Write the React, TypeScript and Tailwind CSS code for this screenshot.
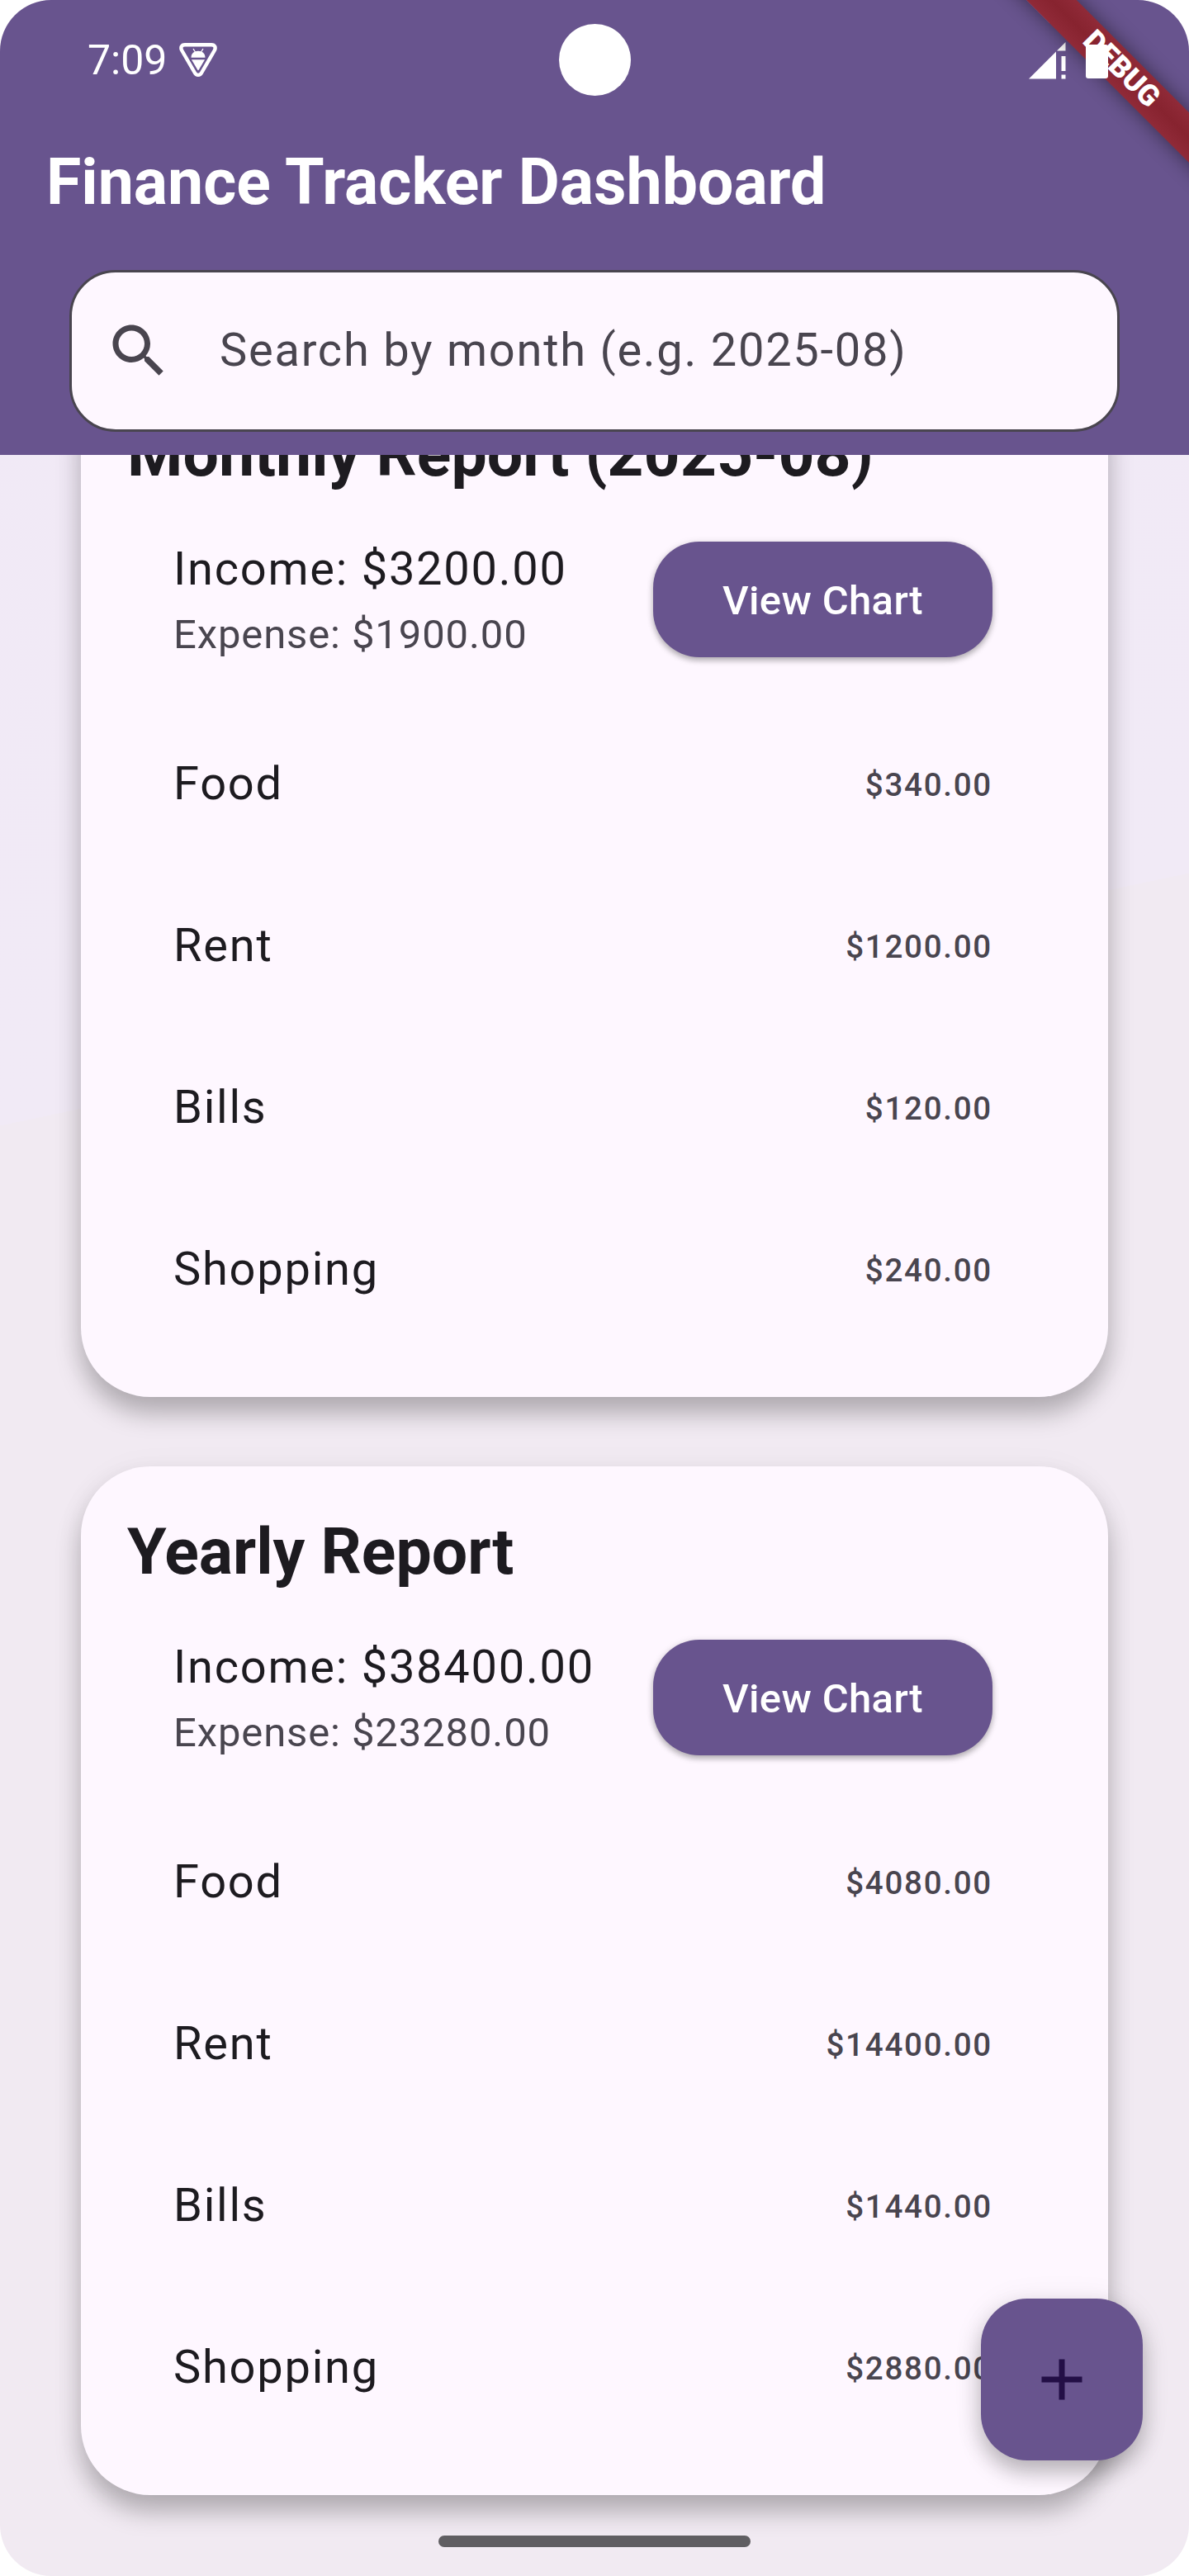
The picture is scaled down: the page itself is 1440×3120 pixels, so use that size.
import React from "react";

type Row = { name: string; amount: string };
type Report = { title: string; income: string; expense: string; rows: Row[] };

const reports: Report[] = [
  {
    title: "Monthly Report (2025-08)",
    income: "$3200.00",
    expense: "$1900.00",
    rows: [
      { name: "Food", amount: "$340.00" },
      { name: "Rent", amount: "$1200.00" },
      { name: "Bills", amount: "$120.00" },
      { name: "Shopping", amount: "$240.00" },
    ],
  },
  {
    title: "Yearly Report",
    income: "$38400.00",
    expense: "$23280.00",
    rows: [
      { name: "Food", amount: "$4080.00" },
      { name: "Rent", amount: "$14400.00" },
      { name: "Bills", amount: "$1440.00" },
      { name: "Shopping", amount: "$2880.00" },
    ],
  },
];

function DebugBadgeIcon() {
  return (
    <svg className="h-[44px] w-[48px]" viewBox="0 0 48 44" fill="none">
      <path
        d="M8 3.2H40C44.3 3.2 45.6 6.6 43.8 10L28.2 37C26.2 40.8 21.8 40.8 19.8 37L4.2 10C2.4 6.6 3.7 3.2 8 3.2Z"
        stroke="white"
        strokeWidth="4.4"
      />
      <path d="M15.5 18.7C15.5 13.8 19.2 10.8 24 10.8S32.5 13.8 32.5 18.7Z" fill="white" />
      <path d="M18 8.2L20.5 12M30 8.2L27.5 12" stroke="white" strokeWidth="1.3" />
      <path d="M16 21.3H32L24.8 33.6Q24 34.8 23.2 33.6Z" fill="white" />
    </svg>
  );
}

function StatusBar() {
  return (
    <div className="flex h-[144px] items-center justify-between pl-[106px] pr-[149px] pt-[2px]">
      <div className="flex items-center gap-[14px]">
        <span className="text-[50px] leading-[56px] text-white">7:09</span>
        <DebugBadgeIcon />
      </div>
      <svg className="h-[45px] w-[45px]" viewBox="0 0 45 45" fill="white">
        <path d="M0 44.5L33 11.5V44.5ZM34 10.5L44.5 0V10.5ZM39.5 17H44.5V35H39.5ZM39.5 39.5H44.5V44.5H39.5Z" />
      </svg>
    </div>
  );
}

function Header() {
  return (
    <header className="relative z-10 h-[551px] shrink-0 bg-[#68548e]">
      <StatusBar />
      <h1 className="flex h-[154px] items-center pl-[56px] pt-[2px] text-[77px] font-bold text-white">
        Finance Tracker Dashboard
      </h1>
      <div className="mx-[84px] mt-[29px] flex h-[196px] items-center rounded-[56px] border-[3.5px] border-[#49454f] bg-[#fef7ff] pl-[39px]">
        <svg className="h-[84px] w-[84px]" viewBox="0 0 24 24" fill="#49454f">
          <path d="M15.5 14h-.79l-.28-.27C15.41 12.59 16 11.11 16 9.5 16 5.91 13.09 3 9.5 3S3 5.91 3 9.5 5.91 16 9.5 16c1.61 0 3.09-.59 4.23-1.57l.27.28v.79l5 4.99L20.49 19l-4.99-5zm-6 0C7.01 14 5 11.99 5 9.5S7.01 5 9.5 5 14 7.01 14 9.5 11.99 14 9.5 14z" />
        </svg>
        <span className="ml-[56px] pb-[3px] text-[56px] leading-[84px] tracking-[1.75px] text-[#49454f]">
          Search by month (e.g. 2025-08)
        </span>
      </div>
    </header>
  );
}

function ReportCard({ report }: { report: Report }) {
  return (
    <section className="h-[1246px] shrink-0 rounded-[84px] bg-[#fef7ff] p-[56px] shadow-[0_20px_30px_rgba(0,0,0,0.26),0_3px_40px_rgba(0,0,0,0.04)]">
      <h2 className="h-[98px] text-[77px] font-bold leading-[97px] text-[#1d1b20]">{report.title}</h2>
      <div className="flex h-[252px] items-center justify-between pl-[56px] pr-[84px]">
        <div>
          <p className="h-[84px] text-[56px] leading-[81px] tracking-[1.75px] text-[#1d1b20]">Income: {report.income}</p>
          <p className="h-[70px] text-[49px] leading-[72px] tracking-[0.875px] text-[#49454f]">Expense: {report.expense}</p>
        </div>
        <button className="h-[140px] w-[411px] rounded-[56px] bg-[#68548e] pt-[3px] text-[49px] font-medium tracking-[0.35px] text-white shadow-[0_4px_7px_rgba(0,0,0,0.26),0_1px_10px_rgba(0,0,0,0.1)]">
          View Chart
        </button>
      </div>
      {report.rows.map((row) => (
        <div key={row.name} className="flex h-[196px] items-center justify-between pl-[56px] pr-[84px]">
          <span className="h-[84px] text-[56px] leading-[82px] tracking-[1.75px] text-[#1d1b20]">{row.name}</span>
          <span className="h-[56px] text-[38.5px] font-medium leading-[58px] tracking-[1.75px] text-[#49454f]">
            {row.amount}
          </span>
        </div>
      ))}
    </section>
  );
}

export default function App() {
  return (
    <div className="h-[3120px] w-[1440px] bg-white font-['Roboto',sans-serif]">
      <div className="relative flex h-full flex-col overflow-hidden rounded-[62px] bg-[linear-gradient(168deg,#f1e9f6_0%,#f1eaf6_39.8%,#f1eaf2_39.8%,#f1eaf2_100%)]">
        <Header />
        <main className="-mt-[105px] flex flex-col gap-[84px] px-[98px]">
          {reports.map((report) => (
            <ReportCard key={report.title} report={report} />
          ))}
        </main>

        {/* Camera cutout */}
        <div className="absolute left-[677px] top-[29px] z-20 h-[87px] w-[87px] rounded-full bg-white" />

        {/* Debug ribbon, with the battery drawn over it */}
        <div className="absolute right-0 top-0 z-10 h-[280px] w-[320px] overflow-hidden">
          <div className="absolute left-[26px] top-[61px] flex h-[42.5px] w-[420px] rotate-45 items-center justify-center bg-linear-to-b from-[#902a38] via-[#87232f] to-[#902a38] pl-[5px] shadow-[0_0_24px_rgba(0,0,0,0.48)]">
            <span className="text-[35.7px] font-black leading-none text-white">DEBUG</span>
          </div>
        </div>
        <div className="absolute right-[98px] top-[54px] z-20 h-[41px] w-[27px] rounded-[3px] bg-white" />

        <button className="absolute right-[56px] top-[2784px] flex h-[196px] w-[196px] items-center justify-center rounded-[56px] bg-[#68548e] shadow-[0_14px_26px_rgba(0,0,0,0.25),0_3px_38px_rgba(0,0,0,0.07)]">
          <svg className="h-[84px] w-[84px]" viewBox="0 0 24 24" fill="#230f46">
            <path d="M19 13h-6v6h-2v-6H5v-2h6V5h2v6h6v2z" />
          </svg>
        </button>

        {/* Gesture bar */}
        <div className="absolute left-[531px] top-[3071px] h-[14px] w-[378px] rounded-full bg-[#605e62]" />
      </div>
    </div>
  );
}
